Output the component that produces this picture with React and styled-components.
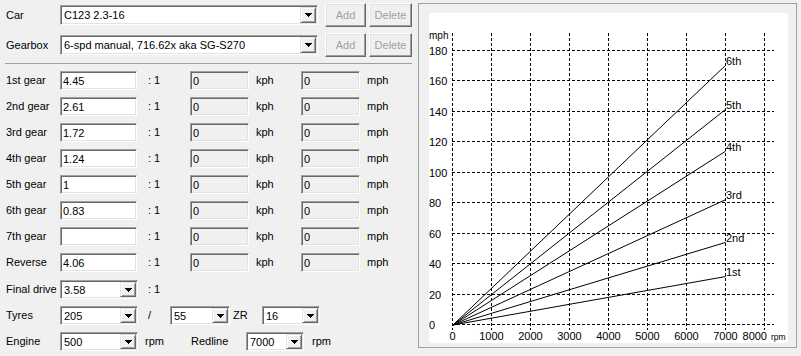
import React from 'react';
import styled, { createGlobalStyle, css } from 'styled-components';

const GlobalStyle = createGlobalStyle`
  html, body { margin: 0; padding: 0; background: #f0f0f0; }
  body { font-family: "Liberation Sans", Arial, sans-serif; font-size: 11px; color: #000; }
  * { box-sizing: border-box; }
`;

const sunken = css`
  border-top: 1px solid #a0a0a0;
  border-left: 1px solid #a0a0a0;
  border-right: 1px solid #ffffff;
  border-bottom: 1px solid #ffffff;
  box-shadow: inset 1px 1px 0 #696969, inset -1px -1px 0 #e3e3e3;
`;

const raised = css`
  border-top: 1px solid #ffffff;
  border-left: 1px solid #ffffff;
  border-right: 1px solid #696969;
  border-bottom: 1px solid #696969;
  box-shadow: inset -1px -1px 0 #a0a0a0, inset 1px 1px 0 #e3e3e3;
`;

const Window = styled.div`
  display: flex;
  align-items: flex-start;
  width: 801px;
  height: 356px;
  padding: 3px 0 0 6px;
  overflow: hidden;
  background: #f0f0f0;
`;

const LeftPane = styled.div`
  display: flex;
  flex-direction: column;
  width: 406px;
  flex-shrink: 0;
`;

const TopRow = styled.div`
  display: flex;
  align-items: center;
  height: 24px;
  margin-top: ${p => p.$mt || 0}px;
`;

const Separator = styled.div`
  height: 1px;
  margin: 6px 0 0 -1px;
  width: 407px;
  background: #a0a0a0;
`;

const GearList = styled.div`
  display: flex;
  flex-direction: column;
  gap: 7px;
  margin-top: 7px;
`;

const FormRow = styled.div`
  display: flex;
  align-items: center;
  height: 19px;
  margin-top: ${p => p.$mt || 0}px;
`;

const Label = styled.span`
  flex-shrink: 0;
  width: ${p => p.$w || 54}px;
  margin-left: ${p => p.$ml || 0}px;
  white-space: nowrap;
  line-height: 1;
`;

const TextBox = styled.input`
  flex-shrink: 0;
  width: ${p => p.$w}px;
  height: 19px;
  margin: 0 0 0 ${p => p.$ml || 0}px;
  padding: 0 0 0 2px;
  ${sunken};
  background: ${p => (p.$readonly ? '#f0f0f0' : '#ffffff')};
  font: inherit;
  color: #000;
  outline: none;
  border-radius: 0;
`;

const ComboBox = styled.div`
  flex-shrink: 0;
  display: flex;
  align-items: stretch;
  width: ${p => p.$w}px;
  height: ${p => p.$h || 19}px;
  margin-left: ${p => p.$ml || 0}px;
  padding: 1px;
  ${sunken};
  background: #ffffff;
`;

const ComboText = styled.span`
  flex: 1;
  display: flex;
  align-items: center;
  padding-left: 2px;
  white-space: nowrap;
  overflow: hidden;
`;

const DropButton = styled.span`
  flex-shrink: 0;
  width: 16px;
  display: flex;
  align-items: center;
  justify-content: center;
  background: #f0f0f0;
  border-top: 1px solid #e3e3e3;
  border-left: 1px solid #e3e3e3;
  border-right: 1px solid #696969;
  border-bottom: 1px solid #696969;
  box-shadow: inset 1px 1px 0 #ffffff, inset -1px -1px 0 #a0a0a0;
`;

const Button = styled.button`
  flex-shrink: 0;
  width: ${p => p.$w}px;
  height: 24px;
  margin-left: ${p => p.$ml || 0}px;
  padding: 0;
  font: inherit;
  color: #a0a0a0;
  background: #f0f0f0;
  ${raised};
  border-radius: 0;
`;

const ChartPanel = styled.div`
  flex-shrink: 0;
  width: 379px;
  height: 345px;
  margin-left: 6px;
  padding: 9px 8px 4px 10px;
  border: 1px solid #a0a0a0;
  background: #f0f0f0;
`;

const ChartArea = styled.div`
  width: 359px;
  height: 330px;
  background: #ffffff;
  border-radius: 2px;
  overflow: hidden;
`;

const Arrow = () => (
  <svg width="7" height="4" viewBox="0 0 7 4" shapeRendering="crispEdges">
    <path d="M0 0h7v1H0z M1 1h5v1H1z M2 2h3v1H2z M3 3h1v1H3z" fill="#000" />
  </svg>
);

const Combo = ({ w, h, ml, value }) => (
  <ComboBox $w={w} $h={h} $ml={ml}>
    <ComboText>{value}</ComboText>
    <DropButton>
      <Arrow />
    </DropButton>
  </ComboBox>
);

const gears = [
  ['1st gear', '4.45'],
  ['2nd gear', '2.61'],
  ['3rd gear', '1.72'],
  ['4th gear', '1.24'],
  ['5th gear', '1'],
  ['6th gear', '0.83'],
  ['7th gear', ''],
  ['Reverse', '4.06'],
];

const X0 = 452.5;
const XSTEP = 39;
const gridRows = Array.from({ length: 10 }, (_, j) => ({
  v: 180 - 20 * j,
  y: Math.floor(50 + 30.5 * j) + 0.5,
}));
const gridCols = Array.from({ length: 9 }, (_, i) => ({ v: i * 1000, x: X0 + XSTEP * i }));

const yOf = mph => 325 - mph * 1.525;
const K = 141.3;
const chartGears = [
  ['1st', 4.45],
  ['2nd', 2.61],
  ['3rd', 1.72],
  ['4th', 1.24],
  ['5th', 1],
  ['6th', 0.83],
];

const Chart = () => (
  <svg width="359" height="330" viewBox="429 13 359 330" fontFamily='"Liberation Sans", Arial, sans-serif'>
    <g stroke="#000" strokeWidth="1" strokeDasharray="3 2" shapeRendering="crispEdges">
      {gridCols.map(c => (
        <line key={'c' + c.v} x1={c.x} y1={33} x2={c.x} y2={330} />
      ))}
      {gridRows.map(r => (
        <line key={'r' + r.v} x1={452} y1={r.y} x2={774} y2={r.y} />
      ))}
    </g>
    <g fontSize="11" fill="#000">
      {gridRows.map(r => (
        <text key={'yl' + r.v} x={429} y={r.y + 4}>
          {r.v}
        </text>
      ))}
      {gridCols.map(c => {
        const last = c.v === 8000;
        return (
          <text key={'xl' + c.v} x={last ? 767 : c.x} y={340} textAnchor={last ? 'end' : 'middle'}>
            {c.v}
          </text>
        );
      })}
    </g>
    <text x={429} y={39} fontSize="10">mph</text>
    <text x={771} y={340} fontSize="8.5">rpm</text>
    <g stroke="#000" strokeWidth="1" fill="none">
      {chartGears.map(([n, r]) => (
        <line key={n} x1={453} y1={325} x2={X0 + XSTEP * 7} y2={yOf(K / r)} />
      ))}
    </g>
    <g fontSize="11" fill="#000">
      {chartGears.map(([n, r]) => (
        <text key={'gl' + n} x={726} y={yOf(K / r) - 0.5}>
          {n}
        </text>
      ))}
    </g>
  </svg>
);

export default function App() {
  return (
    <>
      <GlobalStyle />
      <Window>
        <LeftPane>
          <TopRow>
            <Label>Car</Label>
            <Combo w={258} h={20} value="C123 2.3-16" />
            <Button $w={41} $ml={7}>Add</Button>
            <Button $w={43} $ml={3}>Delete</Button>
          </TopRow>
          <TopRow $mt={6}>
            <Label>Gearbox</Label>
            <Combo w={258} h={20} value="6-spd manual, 716.62x aka SG-S270" />
            <Button $w={41} $ml={7}>Add</Button>
            <Button $w={43} $ml={3}>Delete</Button>
          </TopRow>
          <Separator />
          <GearList>
            {gears.map(([name, ratio]) => (
              <FormRow key={name}>
                <Label>{name}</Label>
                <TextBox $w={77} defaultValue={ratio} />
                <Label $w={31} $ml={11}>: 1</Label>
                <TextBox $w={59} $ml={11} $readonly readOnly defaultValue="0" />
                <Label $w={45} $ml={7}>kph</Label>
                <TextBox $w={59} $readonly readOnly defaultValue="0" />
                <Label $w={30} $ml={7}>mph</Label>
              </FormRow>
            ))}
          </GearList>
          <FormRow $mt={8}>
            <Label>Final drive</Label>
            <Combo w={78} value="3.58" />
            <Label $w={30} $ml={10}>: 1</Label>
          </FormRow>
          <FormRow $mt={7}>
            <Label>Tyres</Label>
            <Combo w={78} value="205" />
            <Label $w={22} $ml={10}>/</Label>
            <Combo w={60} value="55" />
            <Label $w={29} $ml={3}>ZR</Label>
            <Combo w={58} value="16" />
          </FormRow>
          <FormRow $mt={7}>
            <Label>Engine</Label>
            <Combo w={78} value="500" />
            <Label $w={46} $ml={7}>rpm</Label>
            <Label $w={55}>Redline</Label>
            <Combo w={58} value="7000" />
            <Label $w={30} $ml={8}>rpm</Label>
          </FormRow>
        </LeftPane>
        <ChartPanel>
          <ChartArea>
            <Chart />
          </ChartArea>
        </ChartPanel>
      </Window>
    </>
  );
}
